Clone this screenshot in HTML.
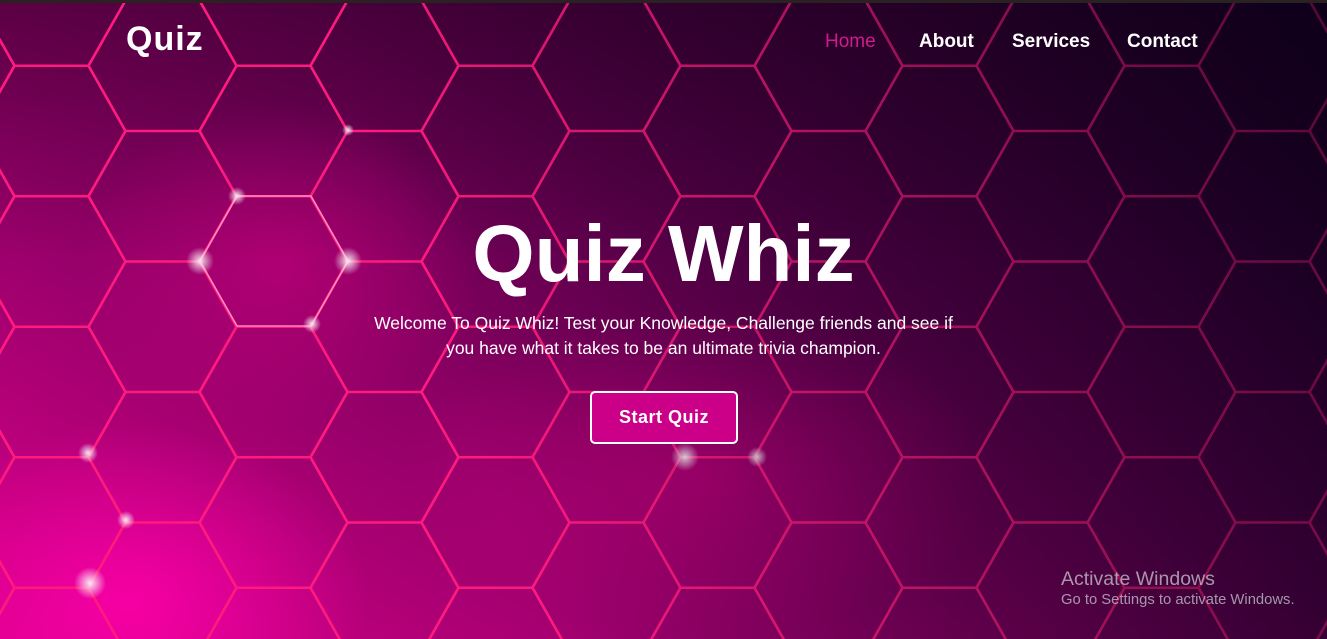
<!DOCTYPE html>
<html><head><meta charset="utf-8"><style>
*{margin:0;padding:0;box-sizing:border-box}
body{width:1327px;height:639px;overflow:hidden;font-family:"Liberation Sans",sans-serif;position:relative;background:#1a0018}
.bg{position:absolute;left:0;top:3px;width:1327px;height:636px;
background:
radial-gradient(ellipse 240px 180px at 130px 600px,rgba(255,0,170,.85),rgba(255,0,170,0) 100%),
radial-gradient(ellipse 200px 160px at 280px 262px,rgba(210,0,130,.55),rgba(210,0,130,0)),
radial-gradient(ellipse 300px 160px at 700px 470px,rgba(230,0,140,.45),rgba(230,0,140,0)),
linear-gradient(180deg,rgba(40,0,30,.35),rgba(40,0,30,0) 40%),
linear-gradient(30deg,#d8008a 0%,#98006a 30%,#640050 55%,#380036 80%,#12001c 100%);}
.top{position:absolute;left:0;top:0;width:1327px;height:3px;background:#2a2222}
svg{position:absolute;left:0;top:3px}
.fade{position:absolute;left:0;top:3px;width:1327px;height:636px;background:linear-gradient(70deg,rgba(20,0,30,0) 35%,rgba(20,0,30,.45) 75%,rgba(10,0,25,.7) 100%)}
.logo{position:absolute;left:126px;top:20px;color:#fff;font-weight:bold;font-size:34px;letter-spacing:1px}
nav a{position:absolute;top:31px;color:#fff;font-weight:bold;font-size:19px;text-decoration:none}
h1{position:absolute;left:0;width:1327px;text-align:center;top:208px;color:#fff;font-size:80px;font-weight:bold}
p{position:absolute;left:0;width:1327px;text-align:center;top:311px;color:#fff;font-size:17.5px;line-height:25px}
.btn{position:absolute;left:590px;top:391px;width:148px;height:53px;background:#cc0088;border:2px solid #fff;border-radius:5px;color:#fff;font-weight:bold;font-size:18px;text-align:center;line-height:49px;letter-spacing:.5px}
.win{position:absolute;left:1061px;top:568px;color:rgba(200,200,210,.75)}
.win b{display:block;font-weight:normal;font-size:19.5px}
.win span{font-size:14.8px}
</style></head><body>
<div class="bg"></div>
<svg width="1327" height="636">
<defs>
<pattern id="h" patternUnits="userSpaceOnUse" x="51.5" y="-2.5" width="222" height="130.5">
<g fill="none" stroke="#ff1a7e" stroke-width="2.5">
<path d="M74 0L37 65.25L-37 65.25L-74 0L-37 -65.25L37 -65.25Z"/>
<path d="M296 0L259 65.25L185 65.25L148 0L185 -65.25L259 -65.25Z"/>
<path d="M74 130.5L37 195.75L-37 195.75L-74 130.5L-37 65.25L37 65.25Z"/>
<path d="M296 130.5L259 195.75L185 195.75L148 130.5L185 65.25L259 65.25Z"/>
<path d="M185 65.25L148 130.5L74 130.5L37 65.25L74 0L148 0Z"/>
</g></pattern>
<radialGradient id="g"><stop offset="0" stop-color="#fff" stop-opacity=".9"/><stop offset="1" stop-color="#fff" stop-opacity="0"/></radialGradient>
</defs>
<rect width="1327" height="636" fill="url(#h)"/>
<g fill="url(#g)">
<circle cx="200" cy="258" r="14"/><circle cx="348" cy="258" r="14"/>
<circle cx="237" cy="193" r="9"/><circle cx="312" cy="321" r="9"/>
<circle cx="685" cy="454" r="14"/><circle cx="757" cy="454" r="10"/>
<circle cx="88" cy="450" r="10"/><circle cx="126" cy="517" r="9"/>
<circle cx="90" cy="580" r="16"/><circle cx="348" cy="127" r="6"/>
</g>
<g stroke="rgba(255,220,235,.6)" stroke-width="1.6" fill="none">
<path d="M200 258L237 193L311 193L348 258L311 323L237 323Z"/>
</g>
</svg>
<div class="fade"></div>
<div class="top"></div>
<div class="logo">Quiz</div>
<nav><a style="left:825px;color:#d01a8e;font-weight:normal">Home</a><a style="left:919px">About</a><a style="left:1012px">Services</a><a style="left:1127px">Contact</a></nav>
<h1>Quiz Whiz</h1>
<p>Welcome To Quiz Whiz! Test your Knowledge, Challenge friends and see if<br>you have what it takes to be an ultimate trivia champion.</p>
<div class="btn">Start Quiz</div>
<div class="win"><b>Activate Windows</b><span>Go to Settings to activate Windows.</span></div>
</body></html>
